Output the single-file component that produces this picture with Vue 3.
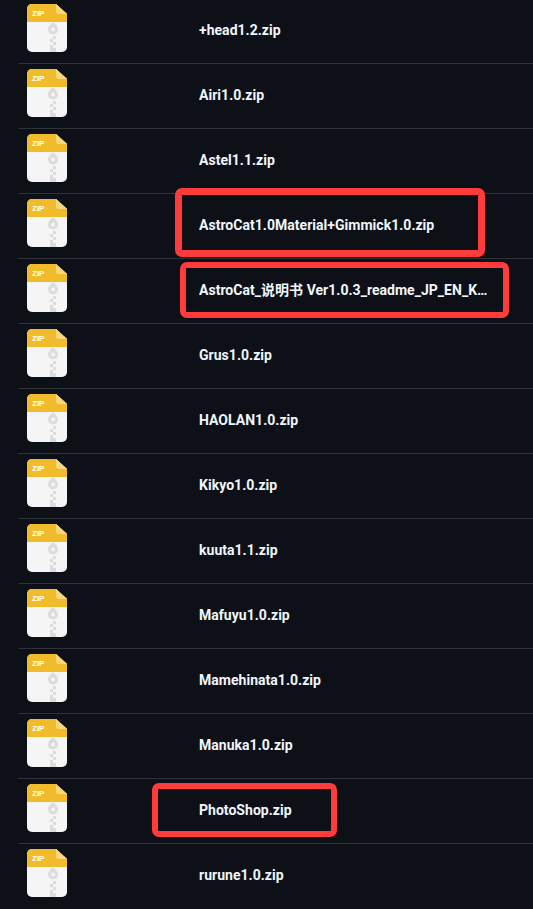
<script setup>
const files = [
  '+head1.2.zip',
  'Airi1.0.zip',
  'Astel1.1.zip',
  'AstroCat1.0Material+Gimmick1.0.zip',
  'AstroCat_说明书 Ver1.0.3_readme_JP_EN_KR.zip',
  'Grus1.0.zip',
  'HAOLAN1.0.zip',
  'Kikyo1.0.zip',
  'kuuta1.1.zip',
  'Mafuyu1.0.zip',
  'Mamehinata1.0.zip',
  'Manuka1.0.zip',
  'PhotoShop.zip',
  'rurune1.0.zip'
]
const marks = [
  { id: 'a', left: 175, top: 188, width: 310, height: 69, line: 7 },
  { id: 'b', left: 180, top: 262, width: 329, height: 56, line: 6 },
  { id: 'c', left: 152, top: 783, width: 185, height: 54, line: 6 }
]
</script>

<template>
  <main class="page">
    <ul class="list">
      <li v-for="name in files" :key="name" class="row">
        <div class="icon-cell">
          <svg class="icon" width="40" height="48" viewBox="0 0 40 48">
            <path d="M5 0H29L40 10V43a5 5 0 0 1-5 5H5a5 5 0 0 1-5-5V5a5 5 0 0 1 5-5Z" fill="#f5f5f5" />
            <path d="M5 0H29L40 10V18H0V5a5 5 0 0 1 5-5Z" fill="#f0bc2c" />
            <path d="M29 0L40 10H32a3 3 0 0 1-3-3Z" fill="#f7d77e" />
            <text x="5" y="12" class="zip">ZIP</text>
            <path d="M26 18.500c1.200 0 5 4 5 7a5 5 0 0 1-10 0c0-3 3.800-7 5-7Z" fill="#dcdcdc" />
            <circle cx="26" cy="25.500" r="2" fill="#f5f5f5" />
            <path d="M26 32h3v3h-3ZM23 35h3v3h-3ZM26 38h3v3h-3ZM23 41h3v3h-3ZM23 44h6v4h-6Z" fill="#dcdcdc" />
          </svg>
        </div>
        <div class="name">{{ name }}</div>
      </li>
    </ul>
    <div
      v-for="m in marks"
      :key="m.id"
      class="mark"
      :style="{ left: m.left + 'px', top: m.top + 'px', width: m.width + 'px', height: m.height + 'px', borderWidth: m.line + 'px' }"
    ></div>
  </main>
</template>

<style>
html, body {
  margin: 0;
  background: #0d1117;
}
</style>

<style scoped>
.page {
  position: relative;
  width: 533px;
  height: 909px;
  overflow: hidden;
  background: #0d1117;
  font-family: Roboto, "Noto Sans CJK SC", sans-serif;
}
.list {
  list-style: none;
  margin: -1px 0 0 18px;
  padding: 0;
}
.row {
  display: flex;
  height: 64px;
  border-bottom: 1px solid #2f3338;
}
.row:last-child {
  border-bottom: none;
}
.icon-cell {
  width: 181px;
  flex: none;
  padding: 5px 0 0 9px;
  box-sizing: border-box;
}
.icon {
  display: block;
}
.zip {
  font-family: "Liberation Sans", sans-serif;
  font-size: 8px;
  font-weight: 700;
  fill: #fff;
}
.name {
  width: 290px;
  height: 62px;
  line-height: 62px;
  font-size: 14px;
  font-weight: 700;
  letter-spacing: 0.03px;
  color: #f0f6fc;
  white-space: nowrap;
  overflow: hidden;
  text-overflow: ellipsis;
}
.mark {
  position: absolute;
  box-sizing: border-box;
  border: 6px solid #ff3b3b;
  border-radius: 7px;
}
</style>
